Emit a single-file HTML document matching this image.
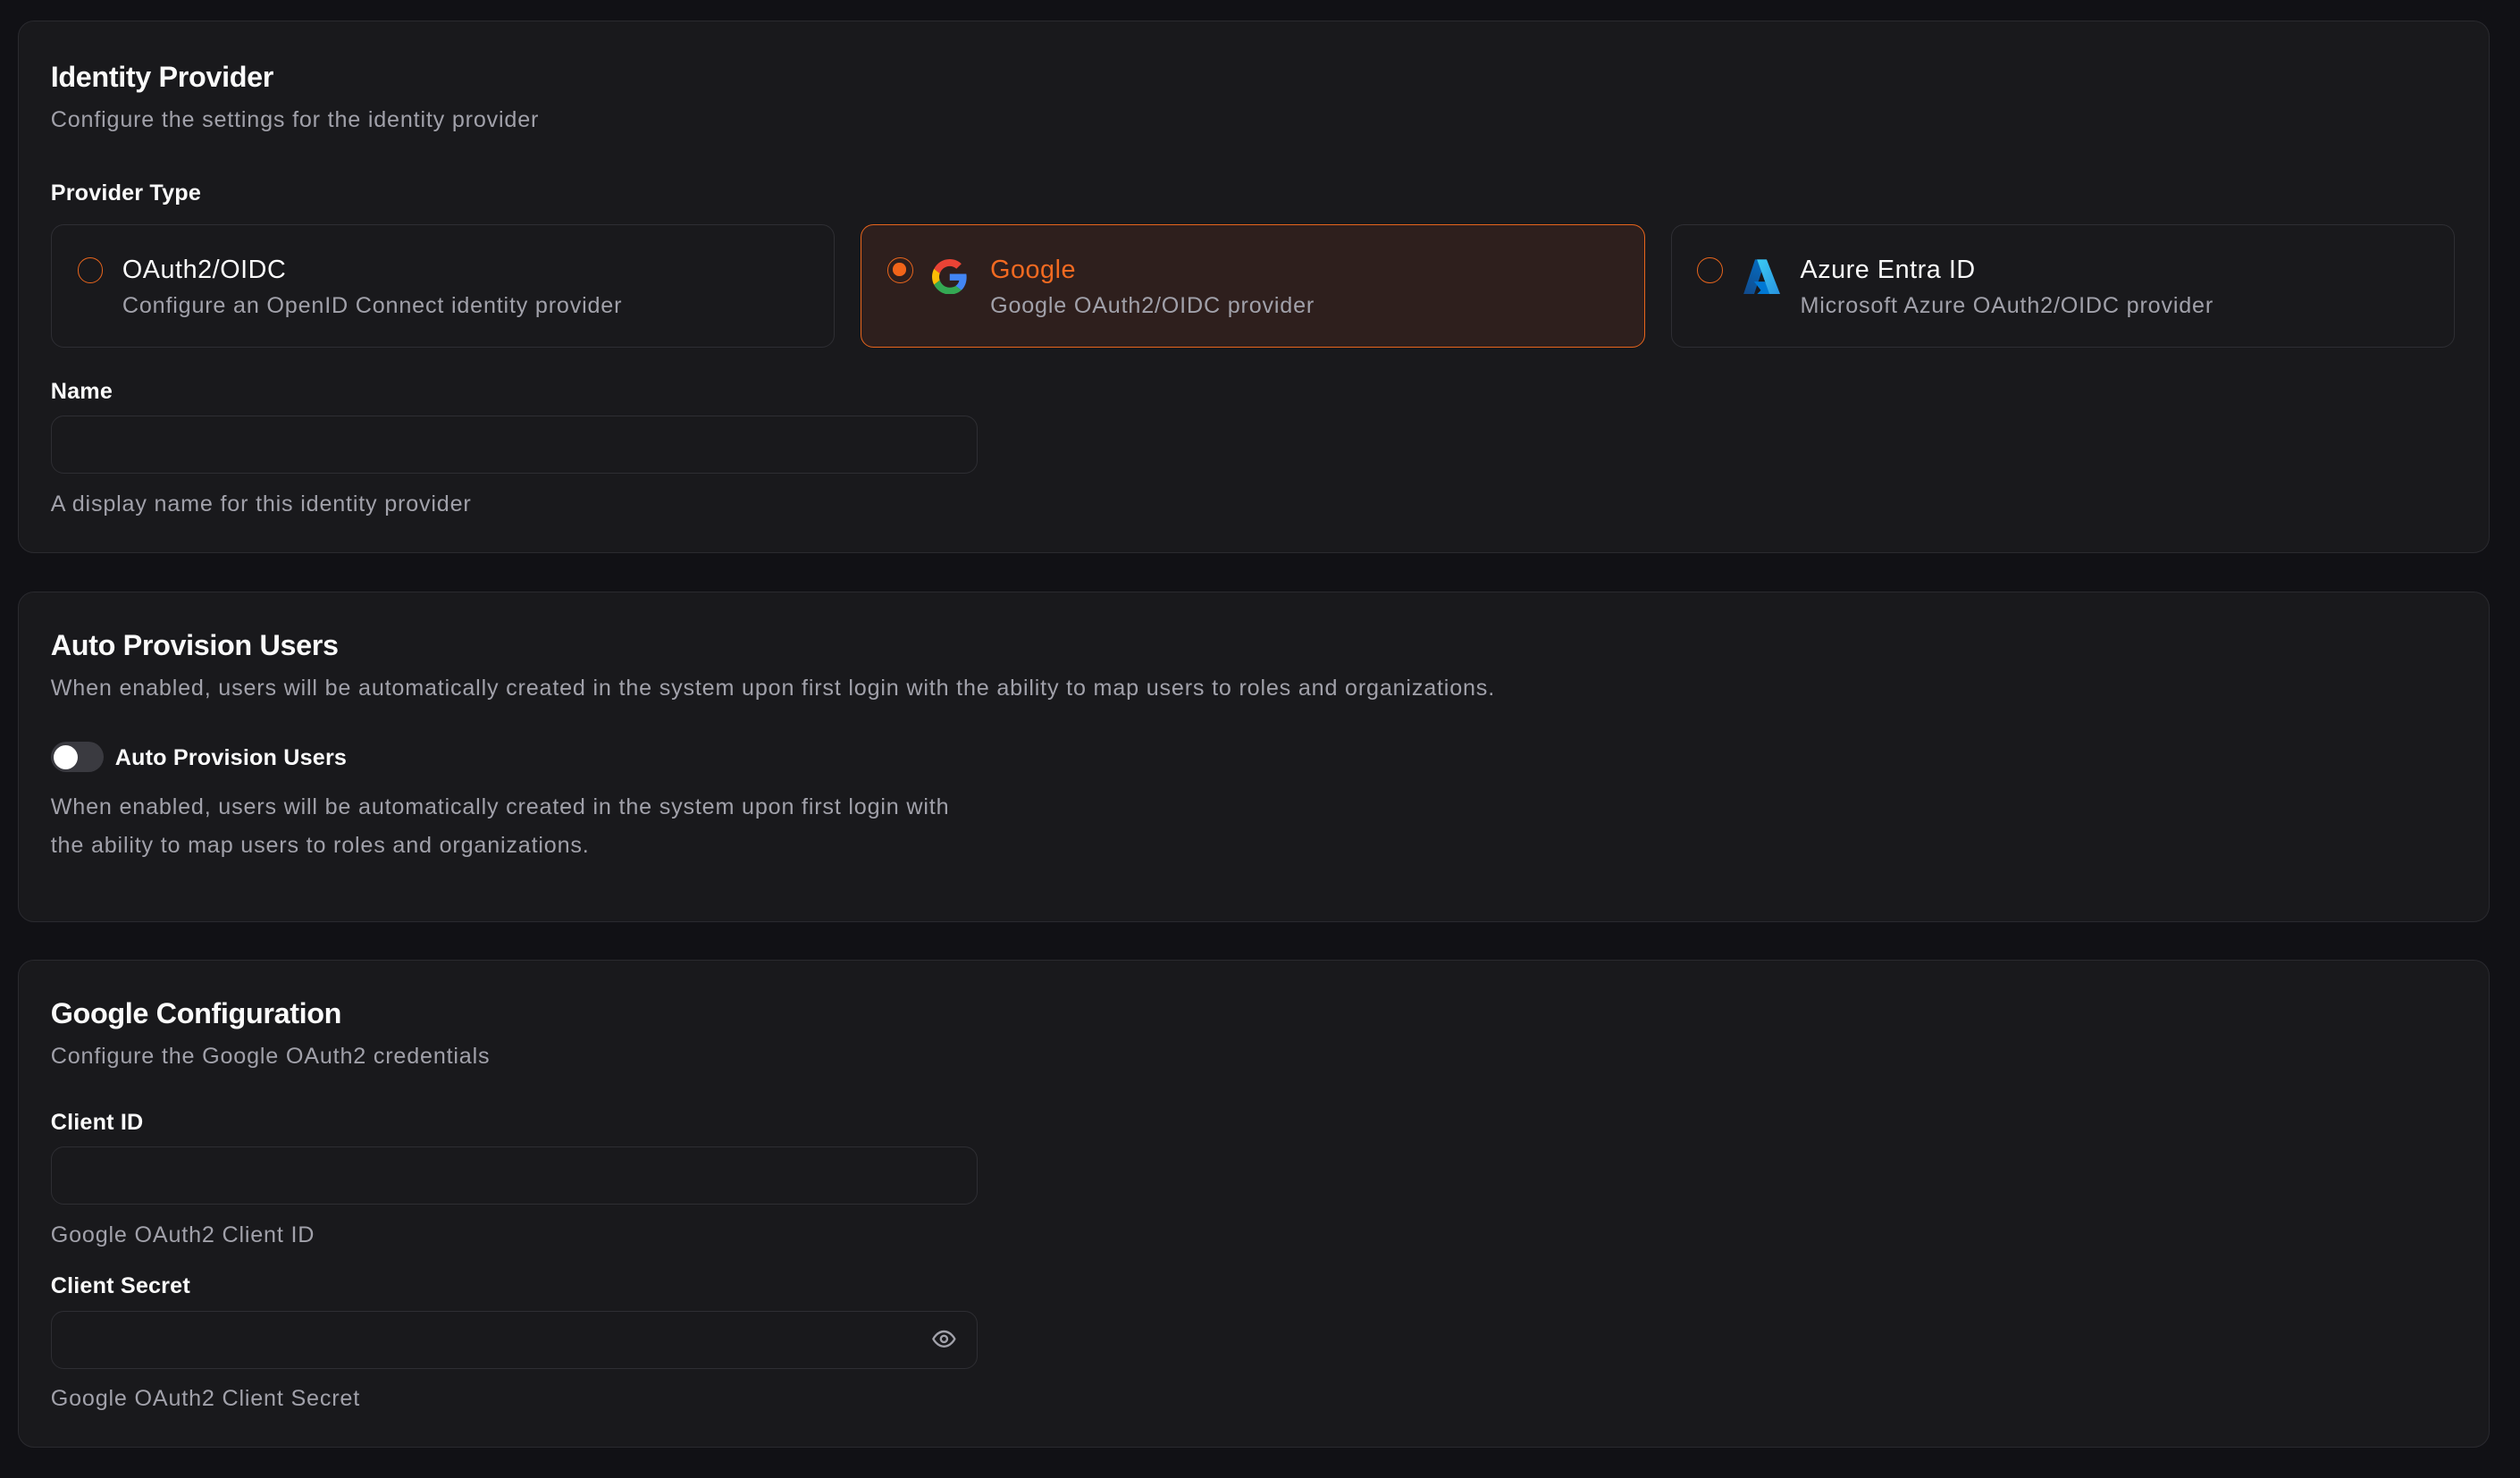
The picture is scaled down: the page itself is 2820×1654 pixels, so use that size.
<!DOCTYPE html>
<html><head><meta charset="utf-8"><style>
*{box-sizing:border-box;margin:0;padding:0}
html,body{width:2820px;height:1654px;background:#111115;overflow:hidden}
#w{zoom:1.7985;position:relative;width:1568px;height:920px;font-family:"Liberation Sans",sans-serif;color:#fafafa}
.card{position:absolute;left:11px;width:1538px;background:#19191c;border:1px solid #2a2a2f;border-radius:10px}
.a{position:absolute;white-space:nowrap}
.h{font-size:18px;font-weight:bold;letter-spacing:-0.2px;margin-top:1px}
.s{font-size:14px;color:#a1a1aa;letter-spacing:0.45px;margin-top:1px}
.l{font-size:14px;font-weight:bold;color:#fafafa;letter-spacing:0.1px;margin-top:1px}
.inp{position:absolute;left:20px;width:577px;height:36px;border:1px solid #2e2e33;border-radius:8px;background:#19191c}
.opt{position:absolute;top:126px;width:488px;height:77px;border:1px solid #2e2e33;border-radius:8px}
.opt.sel{background:#2e1f1d;border-color:#e8651c}
.rad{position:absolute;left:16px;top:20px;width:16px;height:16px;border:1px solid #e8651c;border-radius:50%}
.rad.on::after{content:"";position:absolute;left:3px;top:3px;width:8px;height:8px;border-radius:50%;background:#f26419}
.ot{font-size:16px;top:19px;letter-spacing:0.3px}
.os{font-size:14px;color:#a1a1aa;top:42px;letter-spacing:0.45px}
</style></head><body><div id="w">
<div class="card" style="top:13px;height:331px">
  <div class="a h" style="left:20px;top:23px">Identity Provider</div>
  <div class="a s" style="left:20px;top:52px">Configure the settings for the identity provider</div>
  <div class="a l" style="left:20px;top:98px">Provider Type</div>
  <div class="opt" style="left:20px"><div class="rad"></div>
    <div class="a ot" style="left:44px">OAuth2/OIDC</div>
    <div class="a os" style="left:44px">Configure an OpenID Connect identity provider</div></div>
  <div class="opt sel" style="left:524px"><div class="rad on"></div>
    <svg class="a" style="left:44px;top:21px" width="22" height="22" viewBox="0 0 48 48"><path fill="#EA4335" d="M24 9.5c3.5 0 6.6 1.2 9.1 3.6l6.8-6.8C35.8 2.4 30.3 0 24 0 14.6 0 6.6 5.4 2.7 13.3l7.9 6.2C12.5 13.6 17.8 9.5 24 9.5z"/><path fill="#4285F4" d="M46.9 24.5c0-1.6-.1-3.1-.4-4.5H24v9h12.9c-.6 3-2.3 5.5-4.8 7.2l7.7 6c4.5-4.200 7.1-10.4 7.1-17.7z"/><path fill="#FBBC05" d="M10.5 28.6c-.5-1.4-.8-3-.8-4.6s.3-3.2.8-4.6l-7.9-6.2C1 16.5 0 20.1 0 24s1 7.5 2.7 10.8l7.8-6.2z"/><path fill="#34A853" d="M24 48c6.5 0 11.9-2.1 15.9-5.8l-7.7-6c-2.2 1.5-5 2.3-8.2 2.3-6.2 0-11.5-4.2-13.4-9.9l-7.9 6.2C6.6 42.6 14.6 48 24 48z"/></svg>
    <div class="a ot" style="left:80px;color:#f26a21">Google</div>
    <div class="a os" style="left:80px">Google OAuth2/OIDC provider</div></div>
  <div class="opt" style="left:1028px"><div class="rad"></div>
    <svg class="a" style="left:44px;top:21px" width="24" height="22" viewBox="0 0 40 36"><defs><linearGradient id="g1" x1="0" y1="1" x2="0.3" y2="0"><stop offset="0" stop-color="#114a8b"/><stop offset="1" stop-color="#0669bc"/></linearGradient><linearGradient id="g2" x1="0" y1="0" x2="1" y2="1"><stop offset="0" stop-color="#3ccbf4"/><stop offset="1" stop-color="#2892df"/></linearGradient></defs><path fill="url(#g1)" d="M13 0h11L12 36H1z"/><path fill="#0078d4" d="M23 23H12l7 9-4 4h17z"/><path fill="url(#g2)" d="M15 0h10l14 36H28z"/></svg>
    <div class="a ot" style="left:80px">Azure Entra ID</div>
    <div class="a os" style="left:80px">Microsoft Azure OAuth2/OIDC provider</div></div>
  <div class="a l" style="left:20px;top:221px">Name</div>
  <div class="inp" style="top:245px"></div>
  <div class="a s" style="left:20px;top:291px">A display name for this identity provider</div>
</div>
<div class="card" style="top:368px;height:206px">
  <div class="a h" style="left:20px;top:22px">Auto Provision Users</div>
  <div class="a s" style="left:20px;top:51px">When enabled, users will be automatically created in the system upon first login with the ability to map users to roles and organizations.</div>
  <div class="a" style="left:20px;top:93px;width:33px;height:19px;border-radius:10px;background:#3a3a40"><div style="position:absolute;left:2px;top:2px;width:15px;height:15px;border-radius:50%;background:#fff"></div></div>
  <div class="a l" style="left:60px;top:94px">Auto Provision Users</div>
  <div class="a s" style="left:20px;top:121px;line-height:24px;white-space:normal;width:580px">When enabled, users will be automatically created in the system upon first login with the ability to map users to roles and organizations.</div>
</div>
<div class="card" style="top:597px;height:304px">
  <div class="a h" style="left:20px;top:22px">Google Configuration</div>
  <div class="a s" style="left:20px;top:51px">Configure the Google OAuth2 credentials</div>
  <div class="a l" style="left:20px;top:92px">Client ID</div>
  <div class="inp" style="top:116px"></div>
  <div class="a s" style="left:20px;top:162px">Google OAuth2 Client ID</div>
  <div class="a l" style="left:20px;top:194px">Client Secret</div>
  <div class="inp" style="top:218px"><svg class="a" style="left:547px;top:9px" width="16" height="16" viewBox="0 0 24 24" fill="none" stroke="#a1a1aa" stroke-width="2" stroke-linecap="round" stroke-linejoin="round"><path d="M2 12s3.5-7 10-7 10 7 10 7-3.5 7-10 7S2 12 2 12z"/><circle cx="12" cy="12" r="3"/></svg></div>
  <div class="a s" style="left:20px;top:264px">Google OAuth2 Client Secret</div>
</div>
</div></body></html>
